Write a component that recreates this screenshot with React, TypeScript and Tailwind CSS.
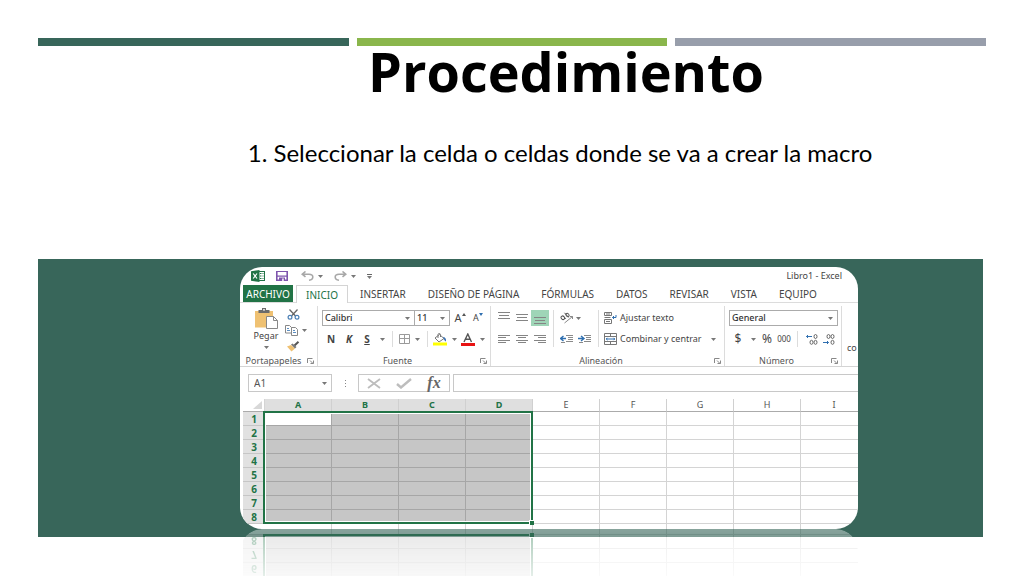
import { ReactNode } from "react";
import clsx from "clsx";

const TABS = ["INSERTAR", "DISEÑO DE PÁGINA", "FÓRMULAS", "DATOS", "REVISAR", "VISTA", "EQUIPO"];
const COLUMNS = ["A", "B", "C", "D", "E", "F", "G", "H", "I"];
const ROWS = [1, 2, 3, 4, 5, 6, 7, 8];
const SELECTED_COLUMNS = 4;

interface ToolProps {
  label: string;
  className?: string;
  children: ReactNode;
}

const Tool = ({ label, className, children }: ToolProps) => (
  <button
    type="button"
    aria-label={label}
    className={clsx("flex h-4 shrink-0 items-center justify-center", className)}
  >
    {children}
  </button>
);

const Caret = () => (
  <svg width="5" height="3" viewBox="0 0 5 3" className="shrink-0" aria-hidden="true">
    <path d="M0 0h5L2.5 3z" fill="#777" />
  </svg>
);

const Divider = ({ className }: { className?: string }) => (
  <div className={clsx("w-px shrink-0 bg-[#dcdcdc]", className)} />
);

interface PickerProps {
  label: string;
  value: string;
  className?: string;
}

// Drop-down with a flat border and its own arrow
const Picker = ({ label, value, className }: PickerProps) => (
  <div className={clsx("flex h-4 shrink-0 items-center border border-[#ababab] bg-white pr-1 pl-0.5", className)}>
    <select
      aria-label={label}
      defaultValue={value}
      className="h-3.5 min-w-0 flex-1 appearance-none bg-transparent text-[9px] leading-[14px] font-medium text-[#333] outline-none"
    >
      <option>{value}</option>
    </select>
    <Caret />
  </div>
);

interface LinesProps {
  rows: [number, number, number][];
}

// Text lines of the alignment icons: x, y, width
const Lines = ({ rows }: LinesProps) => (
  <svg width="12" height="12" viewBox="0 0 12 12" aria-hidden="true">
    {rows.map(([x, y, w]) => (
      <rect key={y} x={x} y={y} width={w} height="1" fill="#858585" />
    ))}
  </svg>
);

const Launcher = ({ label }: { label: string }) => (
  <button type="button" aria-label={label} className="flex w-[13px] shrink-0 items-center justify-center">
    <svg width="7" height="6" viewBox="0 0 7 6" fill="none" stroke="#888" aria-hidden="true">
      <path d="M.5 5V.5h5M3 2.500l3 3" />
      <path d="M6.500 2.500v3H3.500" />
    </svg>
  </button>
);

interface GroupProps {
  title: string;
  className?: string;
  children: ReactNode;
}

const Group = ({ title, className, children }: GroupProps) => (
  <div role="group" aria-label={title} className={clsx("flex shrink-0 flex-col border-r border-[#dcdcdc]", className)}>
    <div className="flex-1">{children}</div>
    <div className="flex h-2.5 items-center">
      <span className="flex-1 text-center text-[9px] leading-3 whitespace-nowrap text-[#555]">{title}</span>
      <Launcher label={`Opciones de ${title}`} />
    </div>
  </div>
);

const ExcelLogo = () => (
  <svg width="14" height="12" viewBox="0 0 14 12" aria-hidden="true">
    <rect x="7" y="1.5" width="6.5" height="9" fill="#fff" stroke="#217346" />
    <path d="M9 3.5h1.5M11.5 3.5h1M9 6h1.5M11.5 6h1M9 8.5h1.5M11.5 8.5h1" stroke="#217346" />
    <path d="M0 1.2 8.5 0v12L0 10.8z" fill="#217346" />
    <path d="m2.2 3.5 3.8 5M6 3.5l-3.8 5" stroke="#fff" strokeWidth="1.2" />
  </svg>
);

const SaveIcon = () => (
  <svg width="12" height="10" viewBox="0 0 12 10" aria-hidden="true">
    <path d="M.8 0v9.300h10.400V0" fill="none" stroke="#7e55ad" strokeWidth="1.600" />
    <path d="M0 0h12v1H0zM1 4.500h10v1.200H1zM3 6.500h6V10H3z" fill="#7e55ad" />
    <path d="M6.200 7.500h1.500V10H6.200z" fill="#fff" />
  </svg>
);

const UndoIcon = ({ flip }: { flip?: boolean }) => (
  <svg width="13" height="10" viewBox="0 0 13 10" fill="none" stroke="#a8a8a8" strokeWidth="1.600" className={clsx(flip && "-scale-x-100")} aria-hidden="true">
    <path d="M4.500.5 1.200 3.200l3.300 2.700M1.500 3.200H8c2.500 0 3.800 1 3.800 2.700S10.500 8.800 8 9.200" />
  </svg>
);

const PasteIcon = () => (
  <svg width="25" height="21" viewBox="0 0 25 21" aria-hidden="true">
    <path d="M1 3h18v16.500H1z" fill="#efc172" />
    <path d="M4.500 2H8V0h4v2h3.500v3h-11z" fill="#6b6b6b" />
    <path d="M9 1.200h2v1.300H9z" fill="#fff" />
    <path d="M12.500 8.500h7l4 4v8h-11z" fill="#fff" stroke="#888" />
    <path d="M19.500 8.500v4h4" fill="none" stroke="#888" />
  </svg>
);

const CutIcon = () => (
  <svg width="13" height="11" viewBox="0 0 13 11" fill="none" aria-hidden="true">
    <path d="m2.500.5 6 6.500M10.500.5l-6 6.500" stroke="#666" strokeWidth="1.300" />
    <circle cx="3" cy="8.300" r="1.900" stroke="#4a7fb5" strokeWidth="1.200" />
    <circle cx="10" cy="8.300" r="1.900" stroke="#4a7fb5" strokeWidth="1.200" />
  </svg>
);

const CopyIcon = () => (
  <svg width="13" height="11" viewBox="0 0 13 11" fill="#fff" stroke="#888" aria-hidden="true">
    <path d="M.5.5h4l2 2v5.500h-6z" />
    <path d="M6.500 2.500h4l2 2v6h-6z" />
    <path d="M2 3.500h2M2 5.500h3M8 5.500h2M8 7.500h3" stroke="#5b8fc4" />
  </svg>
);

const BrushIcon = () => (
  <svg width="14" height="11" viewBox="0 0 14 11" aria-hidden="true">
    <path d="m1 5.500 4-1.500 4 3.500-3.500 3z" fill="#efc172" />
    <path d="m5 3.500 1.500-1 4 3.500-1.500 1.500z" fill="#777" />
    <path d="M8.500 4.500 12.500.8" stroke="#555" strokeWidth="2" />
  </svg>
);

const BordersIcon = () => (
  <svg width="11" height="10" viewBox="0 0 11 10" fill="none" stroke="#9a9a9a" aria-hidden="true">
    <path d="M.5.5h10v9H.5zM5.500.5v9M.5 4.500h10" />
  </svg>
);

const BucketIcon = () => (
  <svg width="14" height="13" viewBox="0 0 14 13" aria-hidden="true">
    <path d="m2 5 4.500-3.500L11 5.500 6 9z" fill="#fff" stroke="#777" />
    <path d="M5 5V1.500C5 .2 7.500.2 7.500 1.500V4" fill="none" stroke="#777" />
    <path d="M10 4c2 .2 3.500 1.500 3 4.500-1.500-.5-2-2-3-4.500z" fill="#3c74b4" />
    <path d="M0 9.500h14V12.500H0z" fill="#ffff00" />
  </svg>
);

const FontColorIcon = () => (
  <svg width="14" height="13" viewBox="0 0 14 13" aria-hidden="true">
    <path d="m3 9 3.800-8 3.700 8M4.500 6.300h4.500" fill="none" stroke="#555" strokeWidth="1.400" />
    <path d="M0 10h14v3H0z" fill="#e81313" />
  </svg>
);

const OrientationIcon = () => (
  <svg width="14" height="12" viewBox="0 0 14 12" fill="none" stroke="#555" aria-hidden="true">
    <ellipse cx="2.800" cy="5.800" rx="1.500" ry="1.900" transform="rotate(-45 2.800 5.800)" />
    <path d="m2.800 3.300 3 3.500M4.500.8l4 4.500" />
    <ellipse cx="7.500" cy="3" rx="1.400" ry="1.800" transform="rotate(-45 7.500 3)" />
    <path d="m4.500 11 8-6.500M10 4.500h2.500V7" stroke="#888" />
  </svg>
);

const IndentIcon = ({ increase }: { increase?: boolean }) => (
  <svg width="14" height="10" viewBox="0 0 14 10" fill="none" aria-hidden="true">
    <path d="M6 1.500h7M8 3.500h5M8 5.500h5M6 7.500h7M1 8.500h4" stroke="#8a8a8a" />
    <path d={increase ? "M0 4.500h5M3 2l3 2.500L3 7" : "M6 4.500H1M3.500 2l-3 2.500 3 2.500"} stroke="#2f6fb0" strokeWidth="1.400" />
  </svg>
);

const WrapIcon = () => (
  <svg width="13" height="12" viewBox="0 0 13 12" fill="none" stroke="#777" aria-hidden="true">
    <path d="M.5.5h7v3h-7zM.5 7.500h7v4h-7zM2 2h4M.5 5.500h6M2 9.500h4" />
    <path d="M12 3v2.500H8.500M10 4 8.500 5.500 10 7" stroke="#2f6fb0" />
  </svg>
);

const MergeIcon = () => (
  <svg width="13" height="12" viewBox="0 0 13 12" fill="none" stroke="#777" aria-hidden="true">
    <path d="M.5.5h12v11H.5zM.5 3.500h12M.5 8.500h12M6.500.5v3M6.500 8.500v3" />
    <path d="M2 6h9M3.500 4.800 2.300 6l1.200 1.200M9.500 4.800 10.700 6 9.500 7.200" stroke="#2f6fb0" />
  </svg>
);

const DecimalsIcon = ({ decrease }: { decrease?: boolean }) => (
  <svg width="13" height="11" viewBox="0 0 13 11" fill="none" stroke="#666" aria-hidden="true">
    <ellipse cx="10.500" cy="2.500" rx="1.500" ry="2" />
    <ellipse cx="10.500" cy="8.300" rx="1.500" ry="2" />
    {decrease ? <ellipse cx="6.500" cy="2.500" rx="1.500" ry="2" /> : <ellipse cx="6.500" cy="8.300" rx="1.500" ry="2" />}
    <path d={decrease ? "M1 8.500h5.500M5 7l1.500 1.500L5 10" : "M7 2.500H1.500M3 1 1.500 2.500 3 4"} stroke="#2f6fb0" />
  </svg>
);

const TitleBar = () => (
  <div className="flex h-[18px] items-center pr-[16px] pl-[11px]">
    <ExcelLogo />
    <Tool label="Guardar" className="ml-[11px]"><SaveIcon /></Tool>
    <Tool label="Deshacer" className="ml-[13px] gap-1"><UndoIcon /><Caret /></Tool>
    <Tool label="Rehacer" className="ml-[11px] gap-1"><UndoIcon flip /><Caret /></Tool>
    <Tool label="Personalizar barra" className="ml-[11px] flex-col gap-px">
      <span className="h-px w-[5px] bg-[#666]" />
      <Caret />
    </Tool>
    <span className="ml-auto text-[9px] leading-3 text-[#444]">Libro1 - Excel</span>
  </div>
);

const TabStrip = () => (
  <nav className="flex h-[18px] items-stretch border-b border-[#dcdcdc] pl-[3px] text-[10px] leading-3 text-[#444]">
    <button type="button" className="w-[50px] shrink-0 bg-[#217346] text-white">ARCHIVO</button>
    <button type="button" className="-mb-px ml-[3px] w-[52px] shrink-0 border border-b-0 border-[#d4d4d4] bg-white text-[#217346]">INICIO</button>
    <div className="ml-3 flex gap-[22px]">
      {TABS.map((tab) => (
        <button key={tab} type="button" className="whitespace-nowrap">{tab}</button>
      ))}
    </div>
  </nav>
);

const Ribbon = () => (
  <div className="flex h-[64px] items-stretch overflow-hidden border-b border-[#d4d4d4] pt-[3px] pl-[3px] text-[#444]">
    <Group title="Portapapeles" className="w-[75px]">
      <div className="flex pl-2">
        <button type="button" className="flex w-[30px] flex-col items-center pt-0.5 text-[9px] leading-3">
          <PasteIcon />
          <span className="mt-px">Pegar</span>
          <span className="mt-1"><Caret /></span>
        </button>
        <div className="ml-1 flex flex-col">
          <Tool label="Cortar" className="w-4"><CutIcon /></Tool>
          <Tool label="Copiar" className="gap-1"><CopyIcon /><Caret /></Tool>
          <Tool label="Copiar formato" className="w-4"><BrushIcon /></Tool>
        </div>
      </div>
    </Group>

    <Group title="Fuente" className="w-[173px]">
      <div className="flex flex-col gap-[5px] pt-1 pl-1">
        <div className="flex">
          <Picker label="Fuente" value="Calibri" className="w-[93px]" />
          <Picker label="Tamaño" value="11" className="-ml-px w-9" />
          <Tool label="Aumentar tamaño" className="w-5 text-[11px] leading-4">
            A
            <svg width="4" height="3" viewBox="0 0 4 3" className="mb-2" aria-hidden="true"><path d="M0 3h4L2 0z" fill="#555" /></svg>
          </Tool>
          <Tool label="Disminuir tamaño" className="w-4 text-[9px] leading-4">
            A
            <svg width="4" height="3" viewBox="0 0 4 3" className="mb-2" aria-hidden="true"><path d="M0 0h4L2 3z" fill="#2f6fb0" /></svg>
          </Tool>
        </div>
        <div className="flex text-[10px] leading-4 font-bold">
          <Tool label="Negrita" className="w-[18px]">N</Tool>
          <Tool label="Cursiva" className="w-[18px] italic">K</Tool>
          <Tool label="Subrayado" className="w-[18px] underline">S</Tool>
          <Tool label="Más subrayados" className="w-3"><Caret /></Tool>
          <Divider className="mx-1" />
          <Tool label="Bordes" className="w-3.5"><BordersIcon /></Tool>
          <Tool label="Más bordes" className="w-3"><Caret /></Tool>
          <Divider className="mx-1" />
          <Tool label="Color de relleno" className="w-4"><BucketIcon /></Tool>
          <Tool label="Más rellenos" className="w-3"><Caret /></Tool>
          <Tool label="Color de fuente" className="w-4"><FontColorIcon /></Tool>
          <Tool label="Más colores" className="w-3"><Caret /></Tool>
        </div>
      </div>
    </Group>

    <Group title="Alineación" className="w-[234px]">
      <div className="flex pt-1 pl-1">
        <div className="grid grid-cols-3 gap-y-[5px]">
          <Tool label="Alinear arriba" className="w-[18px]"><Lines rows={[[0, 0, 12], [1, 3, 10], [0, 6, 12]]} /></Tool>
          <Tool label="Alinear al medio" className="w-[18px]"><Lines rows={[[0, 2, 12], [1, 5, 10], [0, 8, 12]]} /></Tool>
          <Tool label="Alinear abajo" className="w-[18px] bg-[#9fd5b7]"><Lines rows={[[0, 5, 12], [1, 8, 10], [0, 11, 12]]} /></Tool>
          <Tool label="Alinear a la izquierda" className="w-[18px]"><Lines rows={[[0, 2, 12], [0, 4, 8], [0, 7, 12], [0, 9, 8]]} /></Tool>
          <Tool label="Centrar" className="w-[18px]"><Lines rows={[[0, 2, 12], [2, 4, 8], [0, 7, 12], [2, 9, 8]]} /></Tool>
          <Tool label="Alinear a la derecha" className="w-[18px]"><Lines rows={[[0, 2, 12], [4, 4, 8], [0, 7, 12], [4, 9, 8]]} /></Tool>
        </div>
        <Divider className="mx-1" />
        <div className="flex w-9 flex-col items-start gap-[5px]">
          <Tool label="Orientación" className="gap-0.5 pl-0.5"><OrientationIcon /><Caret /></Tool>
          <div className="flex">
            <Tool label="Disminuir sangría" className="w-[18px]"><IndentIcon /></Tool>
            <Tool label="Aumentar sangría" className="w-[18px]"><IndentIcon increase /></Tool>
          </div>
        </div>
        <Divider className="ml-1" />
        <div className="ml-[5px] flex flex-col items-start gap-[5px] text-[9px] leading-4">
          <Tool label="Ajustar texto" className="gap-[3px] whitespace-nowrap"><WrapIcon />Ajustar texto</Tool>
          <Tool label="Combinar y centrar" className="gap-[3px] whitespace-nowrap">
            <MergeIcon />Combinar y centrar
            <span className="ml-1.5"><Caret /></span>
          </Tool>
        </div>
      </div>
    </Group>

    <Group title="Número" className="w-[117px]">
      <div className="flex flex-col gap-[5px] pt-1 pl-1">
        <Picker label="Formato de número" value="General" className="w-[109px]" />
        <div className="flex text-xs leading-4">
          <Tool label="Moneda" className="w-[18px]">$</Tool>
          <Tool label="Más monedas" className="w-3"><Caret /></Tool>
          <Tool label="Porcentaje" className="w-4">%</Tool>
          <Tool label="Millares" className="w-[18px] text-[8px]">000</Tool>
          <Divider className="mx-1" />
          <Tool label="Aumentar decimales" className="w-[18px]"><DecimalsIcon /></Tool>
          <Tool label="Disminuir decimales" className="w-4"><DecimalsIcon decrease /></Tool>
        </div>
      </div>
    </Group>

    <span className="pt-9 pl-[5px] text-[9px] leading-3">co</span>
  </div>
);

const FormulaBar = () => (
  <div className="flex h-[18px] items-stretch pl-2">
    <div className="flex w-[84px] shrink-0 items-center border border-[#c8c8c8] pr-1 pl-[5px]">
      <input aria-label="Cuadro de nombres" defaultValue="A1" className="min-w-0 flex-1 text-[10px] leading-4 text-[#555] outline-none" />
      <Caret />
    </div>
    <span className="flex w-[26px] shrink-0 flex-col items-center justify-center gap-0.5">
      <i className="size-px bg-[#888]" />
      <i className="size-px bg-[#888]" />
      <i className="size-px bg-[#888]" />
    </span>
    <div className="flex w-[92px] shrink-0 items-center border border-[#c8c8c8]">
      <Tool label="Cancelar" className="flex-1">
        <svg width="14" height="11" viewBox="0 0 14 11" fill="none" stroke="#bdbdbd" strokeWidth="1.800" aria-hidden="true">
          <path d="m1 1 12 9M13 1 1 10" />
        </svg>
      </Tool>
      <Tool label="Introducir" className="flex-1">
        <svg width="16" height="11" viewBox="0 0 16 11" fill="none" stroke="#bdbdbd" strokeWidth="2.400" aria-hidden="true">
          <path d="M1 6l4 3.500L15 1" />
        </svg>
      </Tool>
      <Tool label="Insertar función" className="flex-1 font-['Liberation_Serif',serif] text-base leading-4 font-bold text-[#666] italic">fx</Tool>
    </div>
    <input aria-label="Barra de fórmulas" className="ml-[3px] min-w-0 flex-1 border border-r-0 border-[#c8c8c8] text-[10px] outline-none" />
  </div>
);

interface SheetProps {
  rows: number[];
  showHeader?: boolean;
}

const Sheet = ({ rows, showHeader }: SheetProps) => (
  <div className="relative ml-[3px] overflow-hidden">
    <table className="w-[625px] table-fixed border-separate border-spacing-0 text-[9px] leading-3">
      <colgroup>
        <col className="w-[22px]" />
        {COLUMNS.map((column) => (
          <col key={column} className="w-[67px]" />
        ))}
      </colgroup>
      {showHeader && (
        <thead>
          <tr className="h-[13px]">
            <th className="border-r border-b border-[#ababab] border-r-[#d4d4d4] p-0">
              <svg width="9" height="8" viewBox="0 0 9 8" className="mr-0.5 ml-auto" aria-hidden="true">
                <path d="M9 0v8H0z" fill="#d8d8d8" />
              </svg>
            </th>
            {COLUMNS.map((column, index) => (
              <th
                key={column}
                scope="col"
                className={clsx(
                  "border-r border-b border-[#ababab] border-r-[#d0d0d0] p-0",
                  index < SELECTED_COLUMNS ? "bg-[#dfdfdf] font-bold text-[#217346]" : "font-normal text-[#555]"
                )}
              >
                {column}
              </th>
            ))}
          </tr>
        </thead>
      )}
      <tbody>
        {rows.map((row) => (
          <tr key={row} className="h-[14px]">
            <th scope="row" className="border-b border-[#c6c6c6] bg-[#e1e1e1] p-0 text-[10px] leading-3 font-bold text-[#217346]">{row}</th>
            {COLUMNS.map((column, index) => (
              <td
                key={column}
                className={clsx(
                  "border-r border-b p-0",
                  index >= SELECTED_COLUMNS && "border-[#d4d4d4]",
                  index < SELECTED_COLUMNS && "border-[#a6a6a6]",
                  index < SELECTED_COLUMNS && !(row === 1 && index === 0) && "bg-[#c6c6c6]"
                )}
              />
            ))}
          </tr>
        ))}
      </tbody>
    </table>
    {/* columns keep running under the last visible row */}
    <div className="flex h-[5px] pl-[22px]">
      {COLUMNS.map((column) => (
        <div key={column} className="w-[67px] shrink-0 border-r border-[#d4d4d4]" />
      ))}
    </div>
    {/* selection frame with its fill handle */}
    <div
      className={clsx(
        "absolute bottom-[5px] left-[20px] w-[270px] border-2 border-[#217346]",
        showHeader ? "top-[12px]" : "top-0 border-t-0"
      )}
    >
      <div className={clsx("size-full border border-white", !showHeader && "border-t-0")} />
      <div className="absolute -right-[3px] -bottom-[3px] size-[5px] border-t border-l border-white bg-[#217346]" />
    </div>
  </div>
);

const ExcelWindow = () => (
  <div className="overflow-hidden rounded-[22px] bg-white">
    <TitleBar />
    <TabStrip />
    <Ribbon />
    <div className="pt-[7px] pb-[7px]">
      <FormulaBar />
    </div>
    <Sheet rows={ROWS} showHeader />
  </div>
);

// The last rows mirrored under the window, fading out downwards
const Reflection = () => (
  <div
    aria-hidden="true"
    inert
    className="absolute inset-x-0 top-full overflow-hidden rounded-t-[22px] opacity-40 [mask-image:linear-gradient(to_bottom,black,rgba(0,0,0,0.3))]"
  >
    <div className="-scale-y-100 bg-white">
      <Sheet rows={ROWS.slice(-3)} />
    </div>
  </div>
);

const App = () => {
  return (
    <main className="min-h-screen overflow-hidden bg-white pt-[38px] font-['Noto_Sans',sans-serif]">
      <div className="mx-[38px] grid grid-cols-3 gap-2">
        <div className="h-2 bg-[#38665a]" />
        <div className="h-2 bg-[#8ab64c]" />
        <div className="h-2 bg-[#989eab]" />
      </div>

      <header className="mx-[38px] pl-[108px] text-center text-black">
        <h1 className="font-['Open_Sans',sans-serif] text-[54px] leading-[50px] font-bold">Procedimiento</h1>
        <p className="mt-[41px] pr-3 font-[Lato,sans-serif] text-2xl leading-8">
          1. Seleccionar la celda o celdas donde se va a crear la macro
        </p>
      </header>

      <section className="mt-[90px] mr-[41px] ml-[38px] bg-[#38665a] py-2 pr-[125px] pl-[202px]">
        <div className="relative">
          <ExcelWindow />
          <Reflection />
        </div>
      </section>
    </main>
  );
};

export default App;
